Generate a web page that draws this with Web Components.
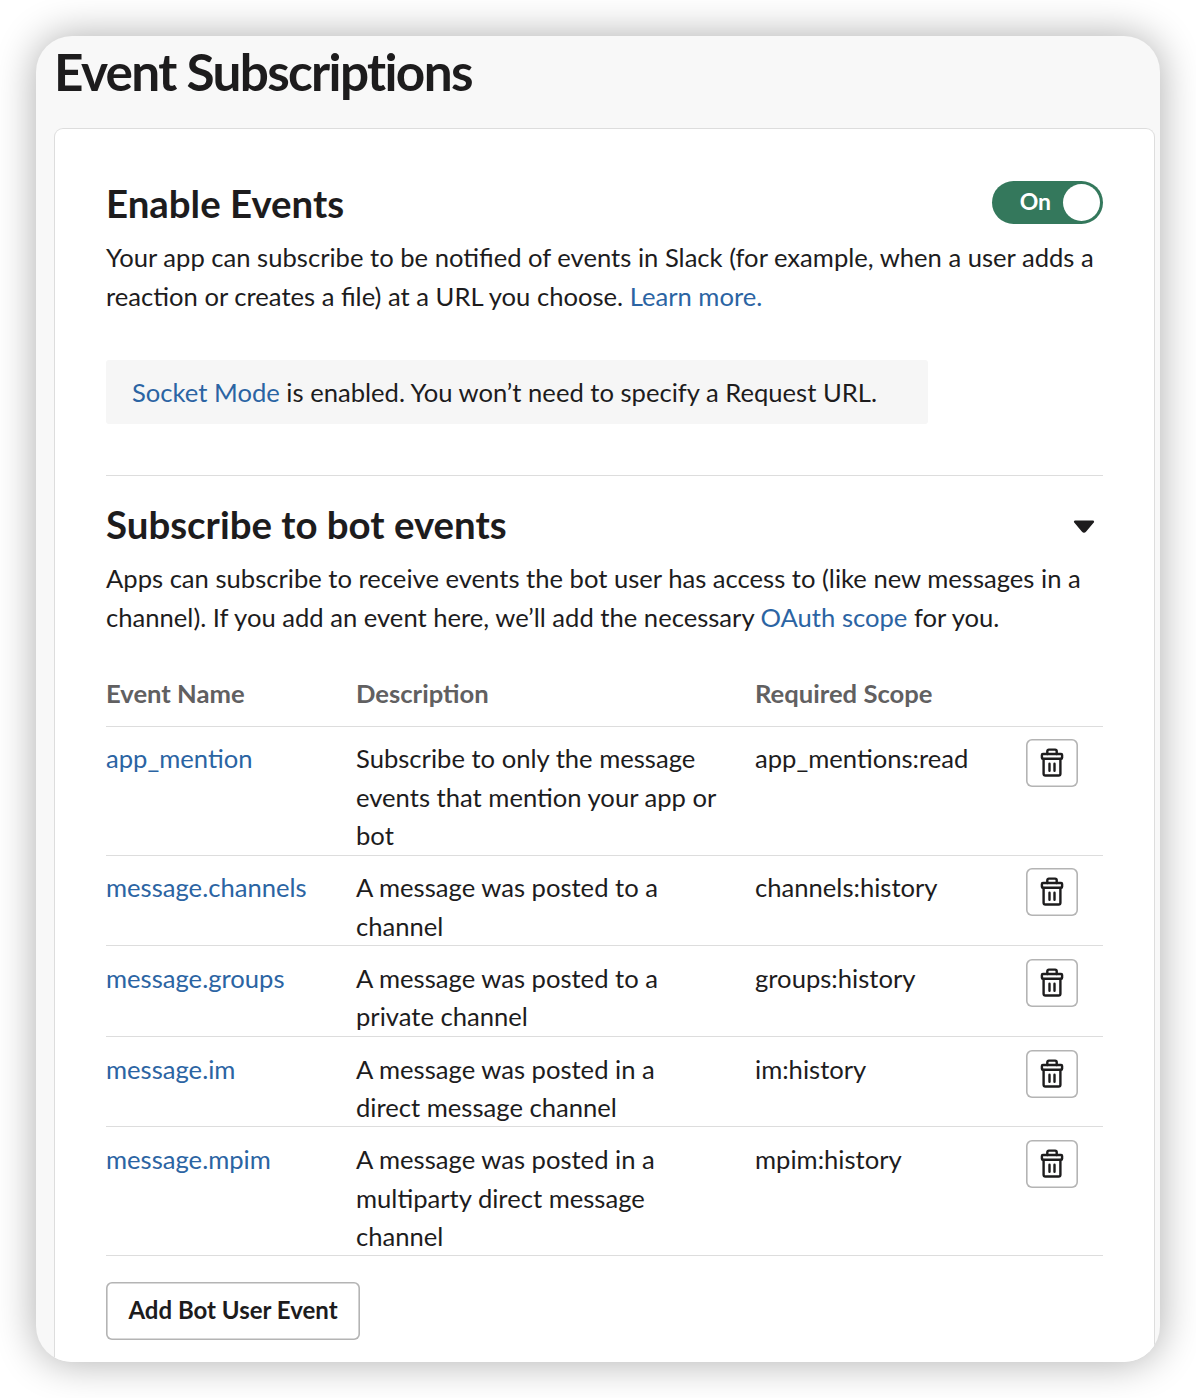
<!DOCTYPE html>
<html lang="en">
<head>
<meta charset="utf-8">
<title>Event Subscriptions</title>
<style>
    body{
        margin:0;
        background:#fff;
        color:#1d1c1d;
        font:25.62px/38.47px Lato,"Liberation Sans",sans-serif;
        --link:#2b64a3;
        --line:#ddd;
        --outline:#b4b4b4;
    }
    a{
        color:var(--link);
        text-decoration:none;
    }
</style>
</head>
<body>
<settings-window>
    <span slot="title">Event Subscriptions</span>
    <settings-section heading="Enable Events">
        <toggle-switch slot="action">On</toggle-switch>
        Your app can subscribe to be notified of events in Slack (for example, when a user adds a reaction or creates a file) at a URL you choose. <a href="#">Learn more.</a>
    </settings-section>
    <info-note><a href="#">Socket Mode</a> is enabled. You won’t need to specify a Request URL.</info-note>
    <settings-section heading="Subscribe to bot events" divided>
        <caret-icon slot="action"></caret-icon>
        Apps can subscribe to receive events the bot user has access to (like new messages in a channel). If you add an event here, we’ll add the necessary <a href="#">OAuth scope</a> for you.
    </settings-section>
    <event-table>
        <event-row name="app_mention" scope="app_mentions:read">Subscribe to only the message events that mention your app or bot</event-row>
        <event-row name="message.channels" scope="channels:history">A message was posted to a channel</event-row>
        <event-row name="message.groups" scope="groups:history">A message was posted to a private channel</event-row>
        <event-row name="message.im" scope="im:history">A message was posted in a direct message channel</event-row>
        <event-row name="message.mpim" scope="mpim:history">A message was posted in a multiparty direct message channel</event-row>
    </event-table>
    <outline-button>Add Bot User Event</outline-button>
</settings-window>

<script>
class BaseElement extends HTMLElement{
    constructor(){
        super();
        const template=document.createElement('template');
        template.innerHTML=this.constructor.markup;
        this.attachShadow({mode:'open'});
        this.shadowRoot.appendChild(template.content.cloneNode(true));
    }
}

class SettingsWindow extends BaseElement{
    static markup=`
<style>
    :host{
        display:flex;
        flex-direction:column;
        box-sizing:border-box;
        width:1124px;
        height:1326px;
        margin:36px;
        padding:0 5px 0 18px;
        border-radius:36px;
        overflow:hidden;
        background:#f8f8f8;
        box-shadow:0 0 40px rgba(0,0,0,.33);
    }
    h1{
        margin:0;
        height:92px;
        font-size:51.3px;
        line-height:70px;
        font-weight:700;
        letter-spacing:-1.66px;
    }
    main{
        flex:1;
        padding:50px 51px 0;
        border:1px solid var(--line);
        border-bottom:0;
        border-radius:9px 9px 0 0;
        background:#fff;
    }
</style>
<h1><slot name="title"></slot></h1>
<main><slot></slot></main>
`;
}

class SettingsSection extends BaseElement{
    static markup=`
<style>
    :host{
        display:block;
    }
    :host([divided]){
        margin-top:51px;
        padding-top:24px;
        border-top:1px solid var(--line);
    }
    header{
        display:flex;
        justify-content:space-between;
        align-items:center;
        height:48px;
        margin-bottom:11px;
    }
    h2{
        margin:0;
        font-size:38.42px;
        line-height:48px;
        font-weight:700;
    }
    p{
        margin:0;
        height:76.94px;
        line-height:39px;
    }
</style>
<header><h2></h2><slot name="action"></slot></header>
<p><slot></slot></p>
`;
    connectedCallback(){
        this.shadowRoot.querySelector('h2').textContent=this.getAttribute('heading');
    }
}

class ToggleSwitch extends BaseElement{
    static markup=`
<style>
    :host{
        display:flex;
        align-items:center;
        justify-content:flex-end;
        gap:12px;
        box-sizing:border-box;
        width:111px;
        height:43px;
        margin-bottom:1px;
        padding-right:3px;
        border-radius:22px;
        background:#34785c;
        color:#fff;
        font-size:23px;
        line-height:36px;
        font-weight:700;
    }
    span{
        margin-bottom:3px;
    }
    i{
        width:37px;
        height:37px;
        border-radius:50%;
        background:#fff;
    }
</style>
<span><slot></slot></span><i></i>
`;
}

class CaretIcon extends BaseElement{
    static markup=`
<style>
    :host{
        display:flex;
        margin:6px 8px 0 0;
    }
</style>
<svg width="22" height="14" viewBox="0 0 22 14"><path d="M2.2 1.7H19.8L12 10.9Q11 12 10 10.9Z" fill="#1d1c1d" stroke="#1d1c1d" stroke-width="2.6" stroke-linejoin="round"/></svg>
`;
}

class InfoNote extends BaseElement{
    static markup=`
<style>
    :host{
        display:block;
        box-sizing:border-box;
        width:822px;
        height:64px;
        margin-top:45px;
        padding:13px 26px;
        border-radius:3px;
        background:#f6f6f6;
        white-space:nowrap;
    }
</style>
<slot></slot>
`;
}

class EventTable extends BaseElement{
    static markup=`
<style>
    :host{
        display:block;
        margin-top:38px;
    }
    .head{
        display:grid;
        grid-template-columns:250px 399px 1fr;
        height:52px;
        border-bottom:1px solid var(--line);
        color:#616061;
        font-weight:700;
    }
</style>
<div class="head"><span>Event Name</span><span>Description</span><span>Required Scope</span></div>
<slot></slot>
`;
}

class EventRow extends BaseElement{
    static markup=`
<style>
    :host{
        display:grid;
        grid-template-columns:250px 399px 271px 52px;
        align-items:start;
        padding-top:12.6px;
        border-bottom:1px solid var(--line);
    }
    a{
        color:var(--link);
        text-decoration:none;
    }
    .description{
        padding-right:32px;
    }
    button{
        display:flex;
        align-items:center;
        justify-content:center;
        width:52px;
        height:48px;
        padding:0;
        border:0;
        border-radius:6px;
        background:#fff;
        box-shadow:inset 0 0 0 1.6px var(--outline);
    }
</style>
<a class="name" href="#"></a>
<span class="description"><slot></slot></span>
<span class="scope"></span>
<button aria-label="Delete">
    <svg width="24" height="30" viewBox="0 0 24 30" fill="none" stroke="#1d1c1d" stroke-width="2.4" stroke-linecap="round" stroke-linejoin="round">
        <path d="M7.3 6V3.2Q7.3 1.6 8.9 1.6H15.1Q16.7 1.6 16.7 3.2V6"/>
        <rect x="1.9" y="6" width="20.2" height="4.7" rx="1"/>
        <path d="M3.6 11V25.8Q3.6 27.5 5.4 27.5H18.6Q20.4 27.5 20.4 25.8V11"/>
        <path d="M9.5 15.7V22.8M14.5 15.7V22.8"/>
    </svg>
</button>
`;
    connectedCallback(){
        this.shadowRoot.querySelector('.name').textContent=this.getAttribute('name');
        this.shadowRoot.querySelector('.scope').textContent=this.getAttribute('scope');
    }
}

class OutlineButton extends BaseElement{
    static markup=`
<style>
    :host{
        display:block;
        margin-top:26px;
    }
    button{
        width:254px;
        height:58px;
        padding:0 0 2px;
        border:0;
        border-radius:6px;
        background:#fff;
        box-shadow:inset 0 0 0 1.6px var(--outline);
        color:inherit;
        font:700 24px/36px Lato,"Liberation Sans",sans-serif;
    }
</style>
<button><slot></slot></button>
`;
}

customElements.define('settings-window', SettingsWindow);
customElements.define('settings-section', SettingsSection);
customElements.define('toggle-switch', ToggleSwitch);
customElements.define('caret-icon', CaretIcon);
customElements.define('info-note', InfoNote);
customElements.define('event-table', EventTable);
customElements.define('event-row', EventRow);
customElements.define('outline-button', OutlineButton);
</script>
</body>
</html>
